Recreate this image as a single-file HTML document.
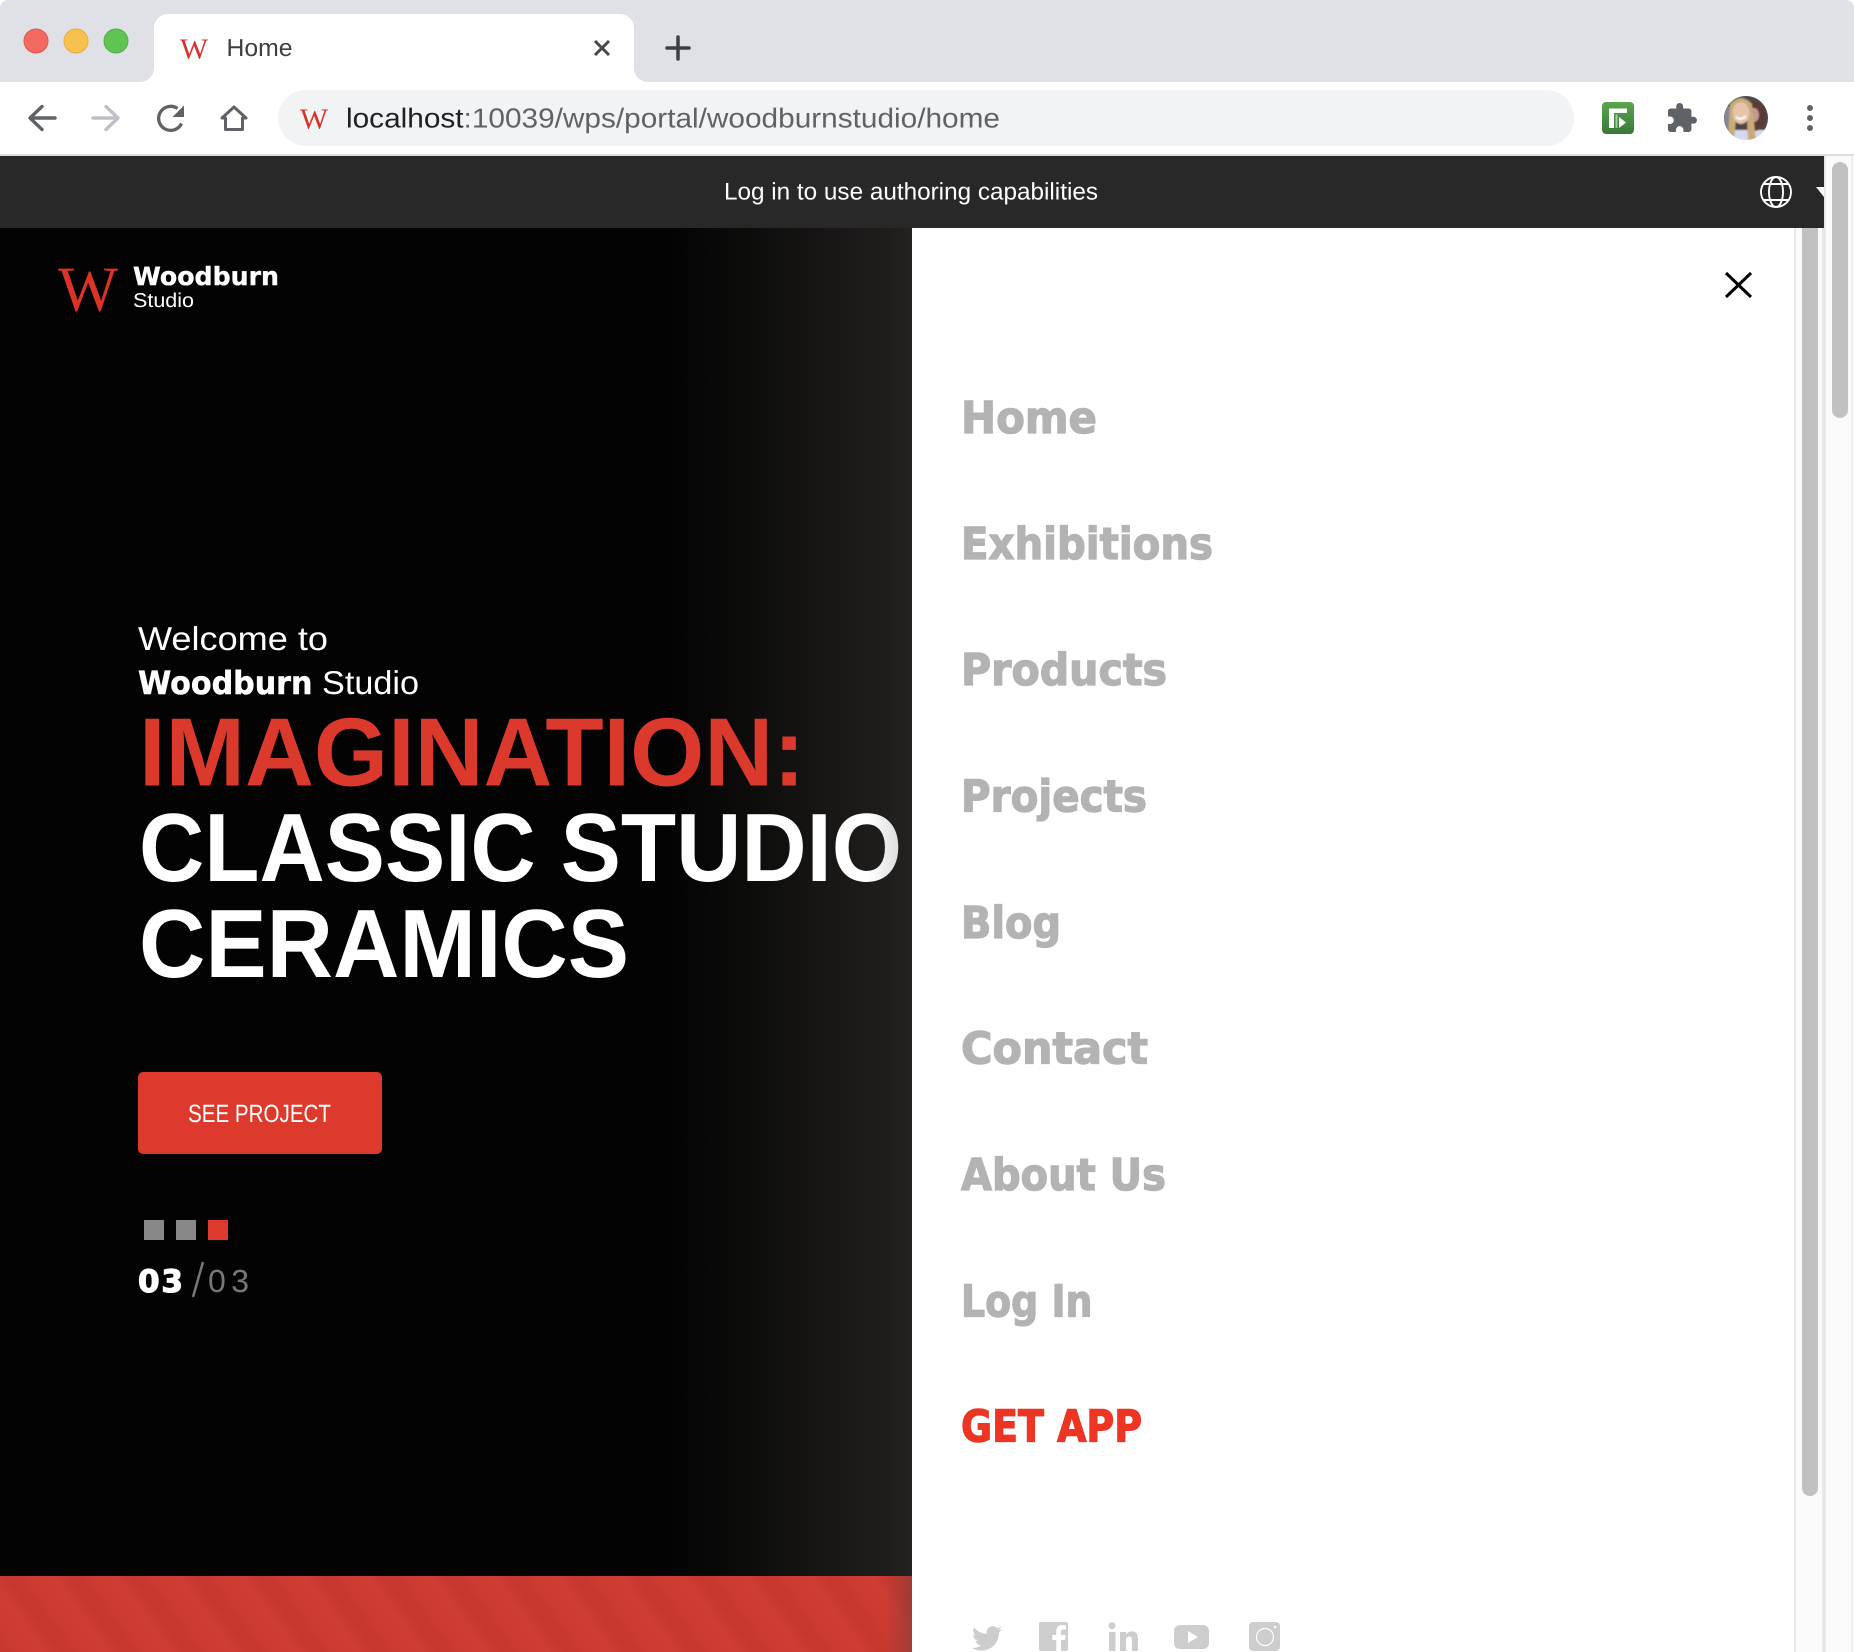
<!DOCTYPE html>
<html><head><meta charset="utf-8"><title>Home</title>
<style>
html,body{margin:0;padding:0;width:1854px;height:1652px;overflow:hidden;background:#fff}
div{position:absolute;box-sizing:border-box}
svg{position:absolute;left:0;top:0}
text{font-family:"Liberation Sans",sans-serif;white-space:pre;text-rendering:geometricPrecision}
.d{font-family:"DejaVu Sans",sans-serif;font-weight:700}
.s{font-family:"Liberation Serif",serif}
</style></head>
<body>
<div style="left:0;top:0;width:1854px;height:82px;background:#dfe1e6;border-radius:8px 8px 0 0"></div>
<div style="left:140px;top:68px;width:508px;height:14px;background:#fff"></div>
<div style="left:126px;top:54px;width:28px;height:28px;background:#dfe1e6;border-bottom-right-radius:14px"></div>
<div style="left:634px;top:54px;width:28px;height:28px;background:#dfe1e6;border-bottom-left-radius:14px"></div>
<div style="left:154px;top:14px;width:480px;height:68px;background:#fff;border-radius:14px 14px 0 0"></div>
<div style="left:278px;top:90px;width:1296px;height:56px;background:#f1f3f4;border-radius:28px"></div>
<div style="left:0;top:154px;width:1854px;height:2px;background:#dfdfe2"></div>

<div style="left:0;top:228px;width:912px;height:1348px;background:linear-gradient(90deg,#030303 0,#030303 670px,#0a0a09 730px,#141312 800px,#1d1b1a 865px,#242220 912px)"></div>
<div style="left:0;top:1576px;width:912px;height:76px;background:repeating-linear-gradient(54.6deg,#c6372e 0,#cc3a32 14px,#ce3c34 36px,#c6372e 51.4px)"></div>
<div style="left:885px;top:1576px;width:27px;height:76px;background:linear-gradient(90deg,rgba(150,60,55,0),rgba(150,60,55,.8))"></div>

<div style="left:1794px;top:156px;width:30px;height:1496px;background:#fafafa;border-left:2px solid #e8e8e8;border-right:2px solid #e8e8e8"></div>
<div style="left:1802px;top:228px;width:16px;height:1268px;background:#c1c1c1;border-radius:0 0 8px 8px"></div>
<div style="left:1824px;top:156px;width:29px;height:1496px;background:#fafafa;border-left:2px solid #e8e8e8;border-right:2px solid #eee"></div>
<div style="left:1832px;top:162px;width:16px;height:256px;background:#c1c1c1;border-radius:8px"></div>
<div style="left:0;top:156px;width:1824px;height:72px;background:#282828"></div>

<svg width="1854" height="1652" viewBox="0 0 1854 1652" xmlns="http://www.w3.org/2000/svg">
<defs>
<linearGradient id="o" gradientUnits="userSpaceOnUse" x1="868" y1="0" x2="900" y2="0"><stop offset="0" stop-color="#fff"/><stop offset="1" stop-color="#dcdcdc"/></linearGradient>
<linearGradient id="g" x1="0" y1="0" x2="0" y2="1"><stop offset="0" stop-color="#58a64c"/><stop offset="1" stop-color="#39793a"/></linearGradient>
<clipPath id="av"><circle cx="1746" cy="118" r="22"/></clipPath>
<filter id="bl" x="-10%" y="-10%" width="120%" height="120%"><feGaussianBlur stdDeviation="0.9"/></filter>
</defs>

<!-- traffic lights -->
<circle cx="36" cy="41" r="12" fill="#f1695f" stroke="#e2574d" stroke-width="1"/>
<circle cx="76" cy="41" r="12" fill="#f8c14e" stroke="#e6ac3e" stroke-width="1"/>
<circle cx="116" cy="41" r="12" fill="#5fc454" stroke="#52ae48" stroke-width="1"/>

<!-- tab -->
<text class="s" x="180" y="58.500" font-size="29" fill="#d9302a" textLength="28" lengthAdjust="spacingAndGlyphs">W</text>
<text x="226.500" y="56" font-size="24.500" fill="#3c4043" textLength="66" lengthAdjust="spacingAndGlyphs">Home</text>
<path d="M595 41 L609 55 M609 41 L595 55" stroke="#45474a" stroke-width="3" fill="none"/>
<path d="M678 37 V59 M667 48 H689" stroke="#3c4043" stroke-width="3.500" stroke-linecap="round" fill="none"/>

<!-- toolbar -->
<path d="M55 118 H31 M42 106.500 L30 118 L42 129.500" stroke="#5f6368" stroke-width="3.400" stroke-linecap="round" stroke-linejoin="round" fill="none"/>
<path d="M93 118 H117 M106 106.500 L118 118 L106 129.500" stroke="#bdc1c6" stroke-width="3.400" stroke-linecap="round" stroke-linejoin="round" fill="none"/>
<path d="M181.500 123.500 A12 12 0 1 1 177.500 108.500" stroke="#5f6368" stroke-width="3.300" fill="none"/>
<path d="M184 105.500 V117 H172.500 Z" fill="#5f6368"/>
<path d="M234 107 L246 118 H242.500 V129.500 H225.500 V118 H222 Z" stroke="#5f6368" stroke-width="3" stroke-linejoin="round" fill="none"/>
<text class="s" x="300" y="128.500" font-size="29" fill="#d9302a" textLength="28" lengthAdjust="spacingAndGlyphs">W</text>
<text x="346" y="127.500" font-size="27.500" fill="#5f6368" textLength="654" lengthAdjust="spacingAndGlyphs"><tspan fill="#202124">localhost</tspan>:10039/wps/portal/woodburnstudio/home</text>

<!-- extensions -->
<rect x="1602" y="102" width="32" height="32" rx="4" fill="url(#g)"/>
<path d="M1609 108.500 H1627 V113 H1614 V128 H1609 Z" fill="#fff"/>
<path d="M1615.500 114.500 H1617.500 V128 H1615.500 Z" fill="#9fd09a"/>
<path d="M1619 117 L1626 122.500 L1619 128 Z" fill="#fff"/>
<path transform="translate(1665.200,101.600) scale(1.380)" fill="#5f6368" d="M20.500 11H19V7c0-1.100-.9-2-2-2h-4V3.500C13 2.120 11.880 1 10.500 1S8 2.120 8 3.500V5H4c-1.100 0-1.990.9-1.990 2v3.800H3.500c1.490 0 2.700 1.210 2.700 2.700s-1.210 2.700-2.700 2.700H2V20c0 1.100.9 2 2 2h3.800v-1.500c0-1.490 1.210-2.700 2.700-2.700 1.490 0 2.700 1.210 2.700 2.700V22H17c1.100 0 2-.9 2-2v-4h1.500c1.380 0 2.500-1.120 2.500-2.500S21.880 11 20.500 11z"/>
<g clip-path="url(#av)">
<g filter="url(#bl)">
<rect x="1720" y="92" width="52" height="52" fill="#4d4748"/>
<rect x="1720" y="130" width="52" height="14" fill="#d6d8ee"/>
<path d="M1726 104 Q1722 118 1727 132 L1732 130 L1730 108 Z" fill="#8a8494"/>
<path d="M1750 101 Q1764 100 1766 116 Q1766 128 1756 131 L1750 128 Z" fill="#5a3a35"/>
<ellipse cx="1754" cy="115" rx="5" ry="7" fill="#c49a8c"/>
<path d="M1730 104 Q1741 92 1752 104 L1756 141 L1748 141 L1747 118 L1736 118 L1734 141 L1728 138 Z" fill="#c9ab7a"/>
<ellipse cx="1741" cy="113" rx="8.500" ry="11" fill="#e6c3a9"/>
<path d="M1736 117 Q1741 121 1746 116" stroke="#fff" stroke-width="2" fill="none"/>
</g>
</g>
<circle cx="1810" cy="108" r="3" fill="#5f6368"/><circle cx="1810" cy="118" r="3" fill="#5f6368"/><circle cx="1810" cy="128" r="3" fill="#5f6368"/>

<!-- authoring bar -->
<text x="724" y="199.500" font-size="24" fill="#fff" textLength="374" lengthAdjust="spacingAndGlyphs">Log in to use authoring capabilities</text>
<g stroke="#fff" stroke-width="1.900" fill="none">
<circle cx="1776" cy="192" r="15"/><ellipse cx="1776" cy="192" rx="7" ry="15"/>
<path d="M1763 184 H1789 M1763 200 H1789"/>
</g>
<path d="M1816 187 H1824 V197 Z" fill="#fff"/>

<!-- logo -->
<text class="s" x="58" y="310.500" font-size="64" fill="#dc3328" textLength="60" lengthAdjust="spacingAndGlyphs">W</text>
<text class="d" x="133" y="285" font-size="25" fill="#fff" stroke="#fff" stroke-width=".4" textLength="146" lengthAdjust="spacingAndGlyphs">Woodburn</text>
<text x="133" y="307" font-size="20" fill="#fff" textLength="61" lengthAdjust="spacingAndGlyphs">Studio</text>

<!-- hero -->
<text x="138" y="650" font-size="33" fill="#fff" textLength="190" lengthAdjust="spacingAndGlyphs">Welcome to</text>
<text class="d" x="138" y="694" font-size="32" fill="#fff" stroke="#fff" stroke-width=".5" textLength="174.500" lengthAdjust="spacingAndGlyphs">Woodburn</text>
<text x="322" y="694" font-size="33" fill="#fff" textLength="97" lengthAdjust="spacingAndGlyphs">Studio</text>
<text x="139" y="785.500" font-size="97" font-weight="700" fill="#dc392d" textLength="666" lengthAdjust="spacingAndGlyphs">IMAGINATION:</text>
<text x="139" y="881" font-size="97" font-weight="700" fill="url(#o)" textLength="763" lengthAdjust="spacingAndGlyphs">CLASSIC STUDIO</text>
<text x="139" y="977" font-size="97" font-weight="700" fill="#fff" textLength="490" lengthAdjust="spacingAndGlyphs">CERAMICS</text>

<rect x="138" y="1072" width="244" height="82" rx="5" fill="#dd392d"/>
<text x="188" y="1122" font-size="25" fill="#fff" textLength="143" lengthAdjust="spacingAndGlyphs">SEE PROJECT</text>
<rect x="144" y="1220" width="20" height="20" fill="#888"/>
<rect x="176" y="1220" width="20" height="20" fill="#888"/>
<rect x="208" y="1220" width="20" height="20" fill="#dd392d"/>
<text class="d" x="138" y="1292" font-size="31" fill="#fff" stroke="#fff" stroke-width="1.200" textLength="45" lengthAdjust="spacing">03</text>
<path d="M203 1262 L193 1297" stroke="#777" stroke-width="2.500"/>
<text x="208" y="1292" font-size="32" fill="#777" textLength="41" lengthAdjust="spacing">03</text>

<!-- close -->
<path d="M1726 273 L1751 297 M1751 273 L1726 297" stroke="#000" stroke-width="3" fill="none"/>

<!-- nav -->
<g fill="#b3b3b3" stroke="#b3b3b3" stroke-width="1.300" font-size="44">
<text class="d" x="961" y="433" textLength="136" lengthAdjust="spacingAndGlyphs">Home</text>
<text class="d" x="961" y="559" textLength="252" lengthAdjust="spacingAndGlyphs">Exhibitions</text>
<text class="d" x="961" y="685" textLength="206" lengthAdjust="spacingAndGlyphs">Products</text>
<text class="d" x="961" y="811.500" textLength="186" lengthAdjust="spacingAndGlyphs">Projects</text>
<text class="d" x="961" y="938" textLength="100" lengthAdjust="spacingAndGlyphs">Blog</text>
<text class="d" x="961" y="1063.500" textLength="187" lengthAdjust="spacingAndGlyphs">Contact</text>
<text class="d" x="961" y="1190" textLength="205" lengthAdjust="spacingAndGlyphs">About Us</text>
<text class="d" x="961" y="1316.500" textLength="131.500" lengthAdjust="spacingAndGlyphs">Log In</text>
</g>
<text class="d" x="961" y="1441.500" font-size="44" fill="#ee3524" stroke="#ee3524" stroke-width="1.300" textLength="181" lengthAdjust="spacingAndGlyphs">GET APP</text>

<!-- social -->
<g fill="#cdcdcd">
<path transform="translate(972,1623.400) scale(1.250)" d="M23.953 4.570a10 10 0 01-2.825.775 4.958 4.958 0 002.163-2.723c-.951.555-2.005.959-3.127 1.184a4.920 4.920 0 00-8.384 4.482C7.690 8.095 4.067 6.130 1.640 3.162a4.822 4.822 0 00-.666 2.475c0 1.710.87 3.213 2.188 4.096a4.904 4.904 0 01-2.228-.616v.06a4.923 4.923 0 003.946 4.827 4.996 4.996 0 01-2.212.085 4.936 4.936 0 004.604 3.417 9.867 9.867 0 01-6.102 2.105c-.39 0-.779-.023-1.170-.067a13.995 13.995 0 007.557 2.209c9.053 0 13.998-7.496 13.998-13.985 0-.21 0-.42-.015-.63A9.935 9.935 0 0024 4.590z"/>
<rect x="1039" y="1622" width="29" height="29" rx="2"/>
<circle cx="1112" cy="1625.700" r="3.500"/>
<rect x="1109" y="1632" width="6.500" height="19"/>
<path d="M1120 1632 h6 v2.600 c1-1.700 3-3.200 5.600-3.200 c5 0 6.400 3.300 6.400 7.800 V1651 h-6 v-10.500 c0-2.500-.6-4-2.800-4 c-2.400 0-3.200 1.700-3.200 4 V1651 h-6 z"/>
<rect x="1174" y="1625" width="35" height="24" rx="6"/>
<rect x="1249" y="1622" width="31" height="29" rx="4"/>
</g>
<path d="M1061 1651 V1640 h4 l.6-5 h-4.600 v-3 c0-1.500.5-2.500 2.500-2.500 h2.400 v-4.300 c-.5 0-2-.2-3.600-.2 c-3.600 0-6 2.200-6 6.200 v3.800 h-4 v5 h4 v11 z" fill="#fff"/>
<path d="M1188 1631 L1198 1637 L1188 1643 Z" fill="#fff"/>
<circle cx="1265" cy="1637" r="8.500" stroke="#fff" stroke-width="1.200" fill="none"/>
<circle cx="1275" cy="1627" r="1.200" fill="#fff"/>
</svg>
</body></html>
